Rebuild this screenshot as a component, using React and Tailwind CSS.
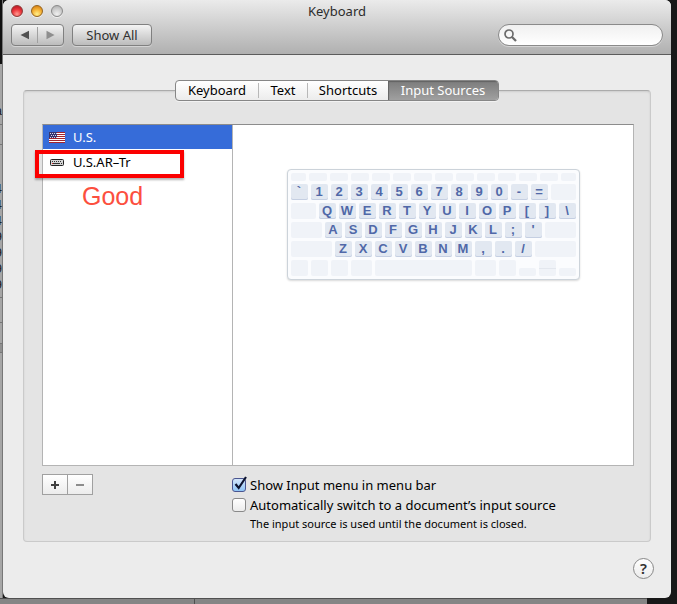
import React from "react";

const FONT = "font-['Noto_Sans','Open_Sans',sans-serif]";

function Light({ className }) {
  return (
    <button
      type="button"
      className={`h-3 w-3 rounded-full border shadow-[0_1px_0_rgba(255,255,255,0.6)] ${className}`}
    />
  );
}

function TitleBar() {
  const button =
    "h-[22px] rounded border border-[#808080] bg-linear-to-b from-[#f4f4f4] to-[#bcbcbc] shadow-[0_1px_0_rgba(255,255,255,0.4)]";
  return (
    <header className="rounded-t-md border-b border-[#5c5c5c] bg-linear-to-b from-[#ebebeb] to-[#b0b0b0] px-2 pb-2">
      <div className="grid h-6 grid-cols-[1fr_auto_1fr] items-start">
        <div className="flex gap-2 pt-[5px]">
          <Light className="border-[#8c3a38] bg-[radial-gradient(circle_at_50%_80%,#ff9a90_0%,#ee3b40_45%,#c8212b_75%)]" />
          <Light className="border-[#94641f] bg-[radial-gradient(circle_at_50%_80%,#fff08a_0%,#f6b73c_45%,#dd8a1a_80%)]" />
          <Light className="border-[#8a8a8a] bg-[radial-gradient(circle_at_50%_80%,#f0f0f0_0%,#cfcfcf_50%,#b4b4b4_85%)]" />
        </div>
        <h1 className="text-[13px] leading-[22px] text-[#2c2c2c]">Keyboard</h1>
      </div>
      <div className="flex items-center gap-2">
        <div className={`flex w-[53px] items-center ${button}`}>
          <button type="button" aria-label="Back" className="flex h-full flex-1 items-center justify-center">
            <svg width="9" height="10" viewBox="0 0 9 10">
              <path d="M9 .8v8.4L.5 5z" fill="#505050" />
            </svg>
          </button>
          <span className="h-4 w-px bg-[#a0a0a0]" />
          <button type="button" aria-label="Forward" className="flex h-full flex-1 items-center justify-center">
            <svg width="9" height="10" viewBox="0 0 9 10">
              <path d="M.5 .8v8.4L8.5 5z" fill="#8e8e8e" />
            </svg>
          </button>
        </div>
        <button type="button" className={`w-20 text-[13px] leading-5 text-[#303030] ${button}`}>
          Show All
        </button>
        <label className="ml-auto flex h-[22px] w-[165px] items-center rounded-full border border-[#8a8a8a] bg-linear-to-b from-[#f0f0f0] to-white px-[5px] shadow-[0_1px_0_rgba(255,255,255,0.4)]">
          <svg width="13" height="13" viewBox="0 0 13 13" fill="none" stroke="#6b6b6b">
            <circle cx="5" cy="5" r="4" strokeWidth="1.7" />
            <path d="M8 8l4 4" strokeWidth="2.3" />
          </svg>
          <input type="text" aria-label="Search" className="min-w-0 flex-1 bg-transparent pl-1 text-[13px] outline-none" />
        </label>
      </div>
    </header>
  );
}

function Tabs() {
  const tab = "h-[19px] text-[13px] leading-[19px] text-black";
  const divider = "h-[15px] w-px bg-[#b8b8b8]";
  return (
    <nav className="relative z-10 flex justify-center">
      <div className="flex h-[21px] items-center overflow-hidden rounded border border-[#868686] bg-linear-to-b from-white to-[#ececec] shadow-[0_1px_0_rgba(255,255,255,0.5)]">
        <button type="button" className={`w-[82px] ${tab}`}>Keyboard</button>
        <span className={divider} />
        <button type="button" className={`w-12 ${tab}`}>Text</button>
        <span className={divider} />
        <button type="button" className={`w-20 ${tab}`}>Shortcuts</button>
        <button
          type="button"
          className="h-[19px] w-[110px] bg-linear-to-b from-[#7c7c7c] to-[#a0a0a0] text-[13px] leading-[19px] text-white shadow-[inset_1px_1px_1px_#636363]"
        >
          Input Sources
        </button>
      </div>
    </nav>
  );
}

function Flag() {
  return (
    <svg width="16" height="11" viewBox="0 0 16 11" className="shrink-0">
      <rect width="16" height="11" fill="#fff" />
      <path d="M0 .5h16M0 2.5h16M0 4.5h16M0 6.5h16M0 8.5h16M0 10.5h16" stroke="#a3252d" />
      <rect width="8" height="6" fill="#35356f" />
      <path d="M1 1.5h7M2 3.5h6M1 5.5h7" stroke="#d5d5e8" strokeDasharray="1 1" />
    </svg>
  );
}

function KeyboardIcon() {
  return (
    <svg width="16" height="11" viewBox="0 0 16 11" className="shrink-0">
      <rect x="1.5" y="2.5" width="13" height="6" rx="1" fill="#d4d4d4" stroke="#222" />
      <path d="M3 4.5h10M4 6.5h1" stroke="#333" strokeDasharray="1 1" />
      <path d="M5 6.5h6M12 6.5h1" stroke="#333" />
      <path d="M3 6.5h1" stroke="#d22" />
    </svg>
  );
}

const blank = "rounded-[2px] bg-[#f0f3f8]";

function Letters({ keys }) {
  return keys.split(" ").map((k) => (
    <span
      key={k}
      className="h-4 w-[17px] rounded-[2px] bg-[#e2e8f1] text-center font-['Liberation_Sans',Arial,sans-serif] text-[13px] leading-4 font-bold text-[#5068a8] shadow-[inset_0_-1px_0_#c5cfe2]"
    >
      {k}
    </span>
  ));
}

function KeyboardPreview() {
  return (
    <div className="flex w-[293px] flex-col gap-[3px] rounded border border-[#ccd3da] bg-[#fbfcfe] p-[3px] shadow-[0_1px_2px_rgba(0,0,0,0.15)]">
      <div className="flex h-2 gap-[3px]">
        {Array.from({ length: 14 }, (_, i) => (
          <span key={i} className={`${i === 0 || i === 13 ? "w-[15px]" : "w-[18px]"} ${blank}`} />
        ))}
      </div>
      <div className="flex gap-[3px]">
        <Letters keys="` 1 2 3 4 5 6 7 8 9 0 - =" />
        <span className={`flex-1 ${blank}`} />
      </div>
      <div className="flex gap-[3px]">
        <span className={`flex-1 ${blank}`} />
        <Letters keys="Q W E R T Y U I O P [ ] \" />
      </div>
      <div className="flex gap-[3px]">
        <span className={`flex-1 ${blank}`} />
        <Letters keys="A S D F G H J K L ; '" />
        <span className={`flex-1 ${blank}`} />
      </div>
      <div className="flex gap-[3px]">
        <span className={`flex-1 ${blank}`} />
        <Letters keys="Z X C V B N M , . /" />
        <span className={`flex-1 ${blank}`} />
      </div>
      <div className="flex h-4 gap-[3px]">
        <span className={`w-[17px] ${blank}`} />
        <span className={`w-[17px] ${blank}`} />
        <span className={`w-[17px] ${blank}`} />
        <span className={`w-[21px] ${blank}`} />
        <span className={`flex-1 ${blank}`} />
        <span className={`w-[21px] ${blank}`} />
        <span className={`w-[17px] ${blank}`} />
        <span className={`h-2 w-[17px] self-end ${blank}`} />
        <span className={`flex w-[17px] items-center ${blank}`}>
          <span className="h-px w-full bg-[#e3e7ee]" />
        </span>
        <span className={`h-2 w-[17px] self-end ${blank}`} />
      </div>
    </div>
  );
}

function SourceList() {
  return (
    <div className="relative flex h-[342px] border border-[#b4b4b4] border-t-[#8c8c8c] bg-white">
      <ul className="w-[190px] border-r border-[#b4b4b4] text-[13px] leading-6">
        <li className="flex h-6 items-center gap-2 bg-[#366cd9] pl-[6px] text-white">
          <Flag />
          <span>U.S.</span>
        </li>
        <li className="flex h-[26px] items-center gap-2 pl-[6px] text-black">
          <KeyboardIcon />
          <span>U.S.AR–Tr</span>
        </li>
      </ul>
      <div className="flex flex-1 items-start justify-center pt-11">
        <KeyboardPreview />
      </div>
      <div className="absolute top-[25px] -left-2 h-7 w-[149px] border-4 border-[#fb0000] shadow-[0_2px_2px_rgba(0,0,0,0.3)]" />
      <div className="absolute top-14 left-[39px] font-['Liberation_Sans',Arial,sans-serif] text-[25px] leading-[30px] text-[#fc4f3e]">
        Good
      </div>
    </div>
  );
}

function Option({ label, defaultChecked }) {
  return (
    <label className="flex h-5 items-center gap-1 text-[13px] leading-5">
      <span className="relative h-[14px] w-[14px]">
        <input
          type="checkbox"
          defaultChecked={defaultChecked}
          className="peer block h-[14px] w-[14px] appearance-none rounded-[3px] border border-[#8a8a8a] bg-linear-to-b from-white to-[#ececec] checked:border-[#4a5590] checked:from-[#d4e6fa] checked:to-[#8fc4f5]"
        />
        <svg
          width="16"
          height="16"
          viewBox="0 0 16 16"
          className="pointer-events-none absolute -top-[2px] left-0 hidden peer-checked:block"
        >
          <path d="M3.5 8l3.2 4L14 1" fill="none" stroke="#0d1430" strokeWidth="2.2" />
        </svg>
      </span>
      {label}
    </label>
  );
}

function Controls() {
  const button = "flex h-[21px] items-center justify-center border border-[#a0a0a0] bg-linear-to-b from-white to-[#ececec]";
  return (
    <div className="flex pt-2">
      <div className="flex w-[190px]">
        <button type="button" aria-label="Add" className={`w-[26px] ${button}`}>
          <svg width="8" height="8" viewBox="0 0 8 8">
            <path d="M0 4h8M4 0v8" stroke="#404040" strokeWidth="2" />
          </svg>
        </button>
        <button type="button" aria-label="Remove" className={`-ml-px w-[26px] ${button}`}>
          <svg width="8" height="8" viewBox="0 0 8 8">
            <path d="M0 4h8" stroke="#8c8c8c" strokeWidth="2" />
          </svg>
        </button>
      </div>
      <div className="pt-px text-black">
        <Option label="Show Input menu in menu bar" defaultChecked />
        <Option label="Automatically switch to a document’s input source" />
        <p className="pl-[18px] text-[11px] leading-[18px]">The input source is used until the document is closed.</p>
      </div>
    </div>
  );
}

function Backdrop() {
  return (
    <div className="w-[3px] overflow-hidden border-r border-[#777] bg-[#a6a6a6] font-['Liberation_Sans',Arial,sans-serif] text-[13px] text-[#222]">
      <div className="h-16 bg-[#111]" />
      <div className="flex h-[61px] flex-col items-end justify-end border-b border-[#777] pb-1">a</div>
      <div className="h-5 border-b border-[#777]" />
      <div className="flex flex-col items-end pt-9 leading-4">
        <span>4</span>
        <span>4</span>
        <span>4</span>
        <span>9</span>
        <span>9</span>
        <span>9</span>
        <span>9</span>
      </div>
      <div className="mt-1 h-[26px] border-y border-[#777]" />
      <div className="mt-5 h-[10px] border-y border-[#777] bg-[#909090]" />
    </div>
  );
}

export default function App() {
  return (
    <div className={`flex min-h-screen flex-col bg-[#181818] ${FONT}`}>
      <div className="flex flex-1">
        <Backdrop />
        <div className="mr-[6px] flex-1 rounded-md bg-[#ececec]">
          <TitleBar />
          <main className="px-5 pt-[25px] pb-[19px]">
            <Tabs />
            <section className="-mt-[11px] rounded border border-[#cacaca] border-t-[#ababab] bg-[#e4e4e4] pt-[33px] pr-4 pb-2 pl-[18px] shadow-[inset_0_1px_2px_rgba(0,0,0,0.1)]">
              <SourceList />
              <Controls />
            </section>
            <div className="-mr-3 flex justify-end pt-4 pr-[9px]">
              <button
                type="button"
                aria-label="Help"
                className="h-[21px] w-[21px] rounded-full border border-[#888] bg-linear-to-b from-white to-[#ececec] text-[15px] leading-[19px] font-semibold text-[#303030]"
              >
                ?
              </button>
            </div>
          </main>
        </div>
      </div>
      <div className="flex h-[6px]">
        <div className="w-[195px] border-t border-r border-[#505050] bg-[#858585]" />
        <div className="flex-1 border-t border-[#505050] bg-[#858585]" />
        <div className="w-[30px] bg-[#181818]" />
      </div>
    </div>
  );
}
